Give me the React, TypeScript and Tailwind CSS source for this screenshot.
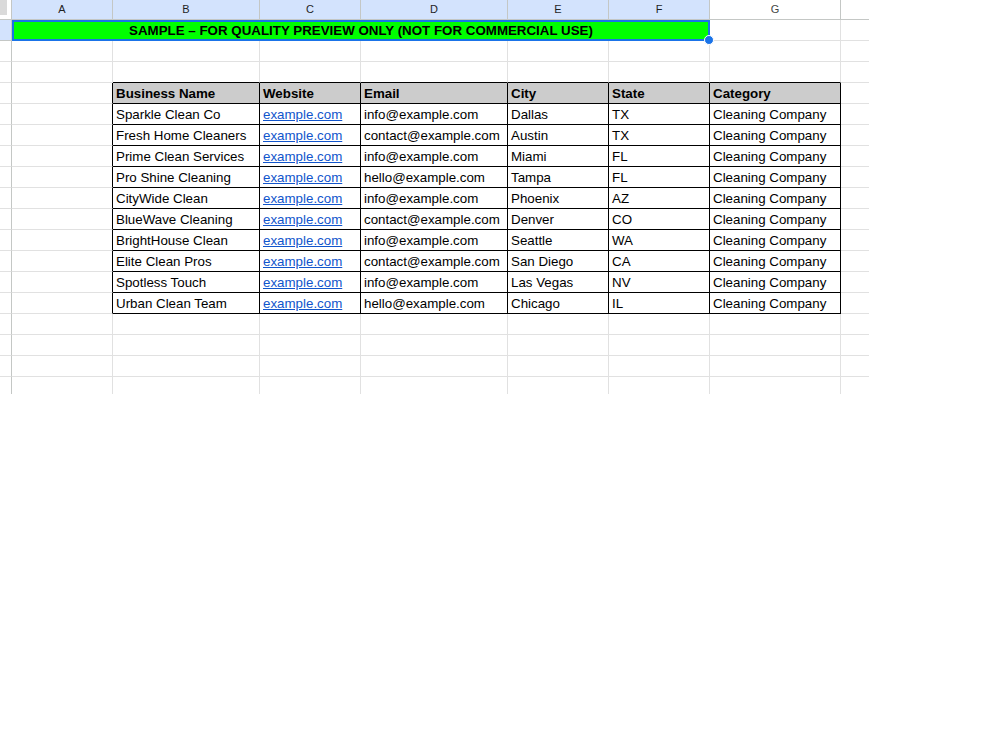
import React from "react";

const W = [
  "w-[101px]",
  "w-[147px]",
  "w-[101px]",
  "w-[147px]",
  "w-[101px]",
  "w-[101px]",
  "w-[131px]",
  "w-[28px]",
];
const LETTERS = ["A", "B", "C", "D", "E", "F", "G", ""];

const HEAD = ["Business Name", "Website", "Email", "City", "State", "Category"];

const DATA = [
  ["Sparkle Clean Co", "info@example.com", "Dallas", "TX"],
  ["Fresh Home Cleaners", "contact@example.com", "Austin", "TX"],
  ["Prime Clean Services", "info@example.com", "Miami", "FL"],
  ["Pro Shine Cleaning", "hello@example.com", "Tampa", "FL"],
  ["CityWide Clean", "info@example.com", "Phoenix", "AZ"],
  ["BlueWave Cleaning", "contact@example.com", "Denver", "CO"],
  ["BrightHouse Clean", "info@example.com", "Seattle", "WA"],
  ["Elite Clean Pros", "contact@example.com", "San Diego", "CA"],
  ["Spotless Touch", "info@example.com", "Las Vegas", "NV"],
  ["Urban Clean Team", "hello@example.com", "Chicago", "IL"],
];

const RowHead = ({ last }: { last?: boolean }) => (
  <div
    className={`w-[12px] shrink-0 border-r border-[#c4c7c5] ${
      last ? "" : "border-b border-b-[#e1e1e1]"
    }`}
  />
);

// plain empty row of gridlines, optional black bottom on the table columns
const BlankRow = ({ tableTop, last }: { tableTop?: boolean; last?: boolean }) => (
  <div className={`flex ${last ? "h-[17px]" : "h-[21px]"}`}>
    <RowHead last={last} />
    {W.map((w, i) => (
      <div
        key={i}
        className={`${w} shrink-0 ${i < 7 ? "border-r border-[#e1e1e1]" : ""} ${
          last ? "" : tableTop && i >= 1 && i <= 6 ? "border-b border-b-black" : "border-b border-b-[#e1e1e1]"
        }`}
      />
    ))}
  </div>
);

const TableRow = ({ cells, header }: { cells: React.ReactNode[]; header?: boolean }) => (
  <div className="flex h-[21px]">
    <RowHead />
    <div className={`${W[0]} shrink-0 border-r border-black border-b border-b-[#e1e1e1]`} />
    {cells.map((c, i) => (
      <div
        key={i}
        className={`${W[i + 1]} shrink-0 border-r border-b border-black flex items-center pt-[2px] pl-[3px] whitespace-nowrap overflow-hidden ${
          header ? "bg-[#cccccc] font-bold" : ""
        }`}
      >
        {c}
      </div>
    ))}
    <div className={`${W[7]} shrink-0 border-b border-[#e1e1e1]`} />
  </div>
);

export default function App() {
  return (
    <div
      className="w-[1000px] h-[750px] bg-white text-[13.33px] text-black"
      style={{ fontFamily: '"Liberation Sans", Arial, sans-serif' }}
    >
      {/* column headers */}
      <div className="flex h-[20px]">
        <div className="w-[12px] shrink-0 border-r border-b border-[#c4c7c5] bg-white">
          <div className="w-[7px] h-[15px] bg-[#dadada]" />
        </div>
        {W.map((w, i) => (
          <div
            key={i}
            className={`${w} shrink-0 border-b border-[#c4c7c5] flex items-center justify-center pb-[1px] text-[11px] ${
              i < 7 ? "border-r" : ""
            } ${i < 6 ? "bg-[#d3e3fd] text-[#1f1f1f]" : "bg-white text-[#444746]"}`}
          >
            {LETTERS[i]}
          </div>
        ))}
      </div>

      {/* row 1, merged banner */}
      <div className="flex h-[21px]">
        <div className="w-[12px] shrink-0 border-r border-b border-[#c4c7c5] bg-[#d3e3fd]" />
        <div className="relative w-[698px] shrink-0 bg-[#00ff00] border-2 border-[#1a73e8] flex items-center justify-center font-bold text-[13.33px] text-black">
          SAMPLE – FOR QUALITY PREVIEW ONLY (NOT FOR COMMERCIAL USE)
          <div className="absolute -right-[6px] -bottom-[6px] w-[10px] h-[10px] rounded-full bg-[#1a73e8] border border-white z-10" />
        </div>
        <div className={`${W[6]} shrink-0 border-r border-b border-[#e1e1e1]`} />
        <div className={`${W[7]} shrink-0 border-b border-[#e1e1e1]`} />
      </div>

      <BlankRow />
      <BlankRow tableTop />

      <TableRow header cells={HEAD} />
      {DATA.map((d, i) => (
        <TableRow
          key={i}
          cells={[
            d[0],
            <span className="text-[#1155cc] underline">example.com</span>,
            d[1],
            d[2],
            d[3],
            "Cleaning Company",
          ]}
        />
      ))}

      <BlankRow />
      <BlankRow />
      <BlankRow />
      <BlankRow last />
    </div>
  );
}
